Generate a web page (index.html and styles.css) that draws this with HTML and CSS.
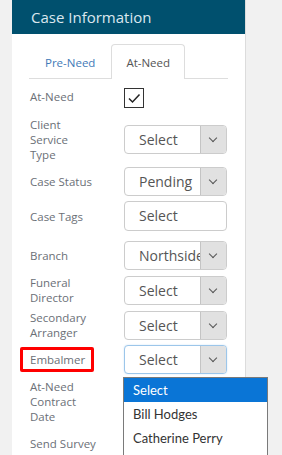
FILE: index.html
```html
<!DOCTYPE html>
<html>
<head>
<meta charset="utf-8">
<title>Case Information</title>
<link rel="stylesheet" href="styles.css">
</head>
<body>
<div class="panel">
  <div class="panel-head">Case Information</div>

  <ul class="tabs">
    <li class="tab">Pre-Need</li>
    <li class="tab active">At-Need</li>
  </ul>

  <div class="form">
    <div class="row row-check">
      <label class="lbl">At-Need</label>
      <span class="check">
        <svg width="20" height="20" viewBox="0 0 20 20"><path d="M5 10.5l3.5 3.5L15.5 6.5" fill="none" stroke="#222" stroke-width="1.5"/></svg>
      </span>
    </div>

    <div class="row">
      <label class="lbl">Client<br>Service<br>Type</label>
      <div class="select"><span class="val">Select</span><span class="arrow"></span></div>
    </div>

    <div class="row">
      <label class="lbl">Case Status</label>
      <div class="select"><span class="val">Pending</span><span class="arrow"></span></div>
    </div>

    <div class="row row-tags">
      <label class="lbl">Case Tags</label>
      <div class="select tags"><span class="val">Select</span></div>
    </div>

    <div class="row">
      <label class="lbl">Branch</label>
      <div class="select"><span class="val">Northside</span><span class="arrow"></span></div>
    </div>

    <div class="row">
      <label class="lbl">Funeral<br>Director</label>
      <div class="select"><span class="val">Select</span><span class="arrow"></span></div>
    </div>

    <div class="row">
      <label class="lbl">Secondary<br>Arranger</label>
      <div class="select"><span class="val">Select</span><span class="arrow"></span></div>
    </div>

    <div class="row">
      <label class="lbl"><span class="marked">Embalmer</span></label>
      <div class="select focus"><span class="val">Select</span><span class="arrow"></span>
        <ul class="options">
          <li class="picked">Select</li>
          <li>Bill Hodges</li>
          <li>Catherine Perry</li>
        </ul>
      </div>
    </div>

    <div class="row">
      <label class="lbl">At-Need<br>Contract<br>Date</label>
      <div></div>
    </div>

    <div class="row row-last">
      <label class="lbl">Send Survey</label>
      <div></div>
    </div>
  </div>
</div>
</body>
</html>
```

FILE: styles.css
```css
body {
  margin: 0;
  height: 455px;
  overflow: hidden;
  background-color: #f1f1f1;
  font-family: "Open Sans", sans-serif;
}

.panel {
  margin-left: 12px;
  width: 233px;
  height: 455px;
  background-color: white;
  border-right: 1px solid #dcdcdc;
}

.panel-head {
  height: 34px;
  line-height: 34px;
  padding-left: 19px;
  background-color: #00506e;
  color: #dbe7ee;
  font-size: 15px;
}

.tabs {
  display: flex;
  list-style: none;
  margin: 10px 17px 0 17px;
  padding: 0;
  border-bottom: 1px solid #dddddd;
  font-size: 11.5px;
}

.tab {
  height: 34px;
  line-height: 36px;
  padding: 0 15px;
  color: #3f7ab8;
  border: 1px solid transparent;
  border-bottom: none;
  margin-bottom: -1px;
}

.tab.active {
  color: #555;
  background-color: white;
  border-color: #dddddd;
  border-radius: 4px 4px 0 0;
  height: 34px;
  padding: 0 14px;
}

.form {
  display: flex;
  flex-direction: column;
  gap: 5px;
  padding: 9px 0 0 18px;
}

.row {
  display: grid;
  grid-template-columns: 94px 103px;
  align-items: center;
}

.row-check {
  margin-bottom: 4px;
}

.row-check .lbl {
  margin-top: -3px;
}

.row-tags {
  margin-bottom: 5px;
}

.row-last {
  min-height: 29px;
}

.lbl {
  font-size: 11.5px;
  line-height: 15px;
  color: #6b7077;
}

.marked {
  display: inline-block;
  margin-left: -10px;
  padding: 2px 6px 2px 7px;
  border: 3px solid #ff0000;
  border-radius: 2px;
}

.check {
  display: block;
  width: 18px;
  height: 18px;
  border: 1px solid #333;
}

.check svg {
  display: block;
  margin: -1px;
}

.select {
  position: relative;
  display: flex;
  height: 27px;
  border: 1px solid #cccccc;
  border-radius: 4px;
  background-color: white;
}

.select.tags {
  height: 28px;
}

.select.focus {
  border-color: #9cc6ea;
  box-shadow: 0 0 2px #cfe3f5;
}

.val {
  flex: 1;
  overflow: hidden;
  white-space: nowrap;
  padding-left: 14px;
  line-height: 27px;
  font-size: 14px;
  color: #555;
}

.arrow {
  position: relative;
  width: 25px;
  background-color: #e1e1e1;
  border-left: 1px solid #c4c4c4;
  border-radius: 0 3px 3px 0;
}

.arrow::after {
  content: "";
  position: absolute;
  left: 9px;
  top: 9px;
  width: 5px;
  height: 5px;
  border-right: 1px solid #555;
  border-bottom: 1px solid #555;
  transform: rotate(45deg);
}

.options {
  position: absolute;
  left: -2px;
  top: 31px;
  width: 143px;
  height: 90px;
  margin: 0;
  padding: 0;
  list-style: none;
  background-color: white;
  border: 1px solid #7a7a7a;
  border-bottom: none;
  font-family: Lato, sans-serif;
  font-size: 13px;
}

.options li {
  height: 24px;
  line-height: 24px;
  padding-left: 9px;
  color: #333;
}

.options li.picked {
  background-color: #0a75d6;
  color: white;
}
```
